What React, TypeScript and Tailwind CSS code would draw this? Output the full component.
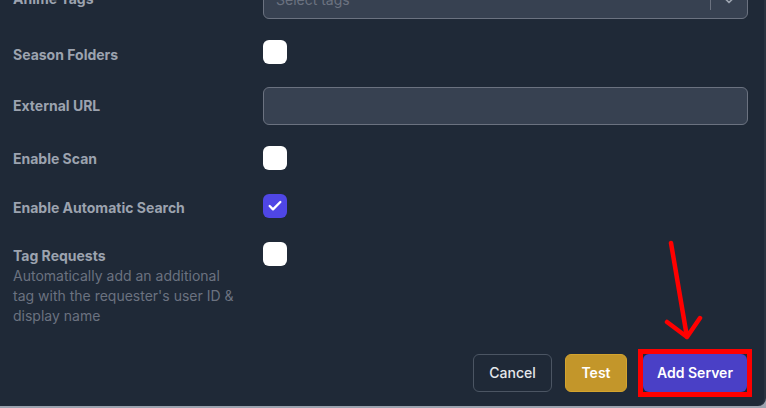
import { Check, ChevronDown } from "lucide-react";

const labelClass = "w-[250px] shrink-0 pt-2 text-sm leading-5 font-bold text-[#9ca3af]";

function Box({ checked }: { checked?: boolean }) {
  return checked ? (
    <div className="w-6 h-6 rounded-md bg-[#4f46e5] flex items-center justify-center">
      <Check className="w-4 h-4 text-white" strokeWidth={3.5} />
    </div>
  ) : (
    <div className="w-6 h-6 rounded-md bg-white" />
  );
}

export default function App() {
  return (
    <div className="w-[766px] h-[408px] overflow-hidden bg-[#9ca3af] font-['Inter',sans-serif]">
      <div className="relative h-[406px] bg-[#1f2937] border-r-2 border-[#2a3340] rounded-br-lg overflow-hidden">
        <div className="pl-[13px] pr-4 -mt-[19px]">
          {/* Anime Tags */}
          <div className="flex">
            <div className={labelClass}>Anime Tags</div>
            <div className="flex-1 h-[38px] rounded-md border border-[#6b7280] bg-[#374151] flex items-center">
              <span className="flex-1 pl-3 text-sm text-[#6b7280]">Select tags</span>
              <div className="w-px h-5 bg-[#6b7280]" />
              <div className="w-9 flex justify-center">
                <ChevronDown className="w-5 h-5 text-[#9ca3af]" />
              </div>
            </div>
          </div>

          {/* Season Folders */}
          <div className="flex mt-[18px]">
            <div className={labelClass}>Season Folders</div>
            <div className="pt-[3px]"><Box /></div>
          </div>

          {/* External URL */}
          <div className="flex mt-[22px]">
            <div className={labelClass + " pt-[9px]"}>External URL</div>
            <div className="flex-1 h-[38px] rounded-md border border-[#6b7280] bg-[#374151]" />
          </div>

          {/* Enable Scan */}
          <div className="flex mt-4">
            <div className={labelClass}>Enable Scan</div>
            <div className="pt-[5px]"><Box /></div>
          </div>

          {/* Enable Automatic Search */}
          <div className="flex mt-5">
            <div className={labelClass}>Enable Automatic Search</div>
            <div className="pt-1"><Box checked /></div>
          </div>

          {/* Tag Requests */}
          <div className="flex mt-5">
            <div className="w-[250px] shrink-0 pt-2 text-sm leading-5">
              <div className="font-bold text-[#9ca3af]">Tag Requests</div>
              <div className="text-[#6b7280] pr-6">
                Automatically add an additional tag with the requester's user ID &amp; display name
              </div>
            </div>
            <div className="pt-1"><Box /></div>
          </div>

          {/* Buttons */}
          <div className="flex justify-end items-center gap-[13px] mt-7 pr-px">
            <button className="h-[38px] w-[79px] rounded-md border border-[#4b5563] text-sm font-medium text-[#e5e7eb]">
              Cancel
            </button>
            <button className="h-[38px] w-[62px] rounded-md border border-[#d4a42e] bg-[#c3962a] text-sm font-semibold text-white">
              Test
            </button>
            <div className="relative ml-[3px]">
              <button className="h-[38px] w-[104px] rounded-md bg-[#4a40c6] text-sm font-semibold text-white">
                Add Server
              </button>
              <div className="absolute -left-[5px] -right-[5px] -top-[5px] -bottom-[5px] border-[5px] border-[#ff0000]" />
            </div>
          </div>
        </div>

        {/* annotation arrow */}
        <svg className="absolute left-0 top-0" width="766" height="408" fill="none">
          <path d="M671 243 L687 337 M667 322 L687 337 L700 318" stroke="#ff0000" strokeWidth="4.5" strokeLinecap="round" strokeLinejoin="round" />
        </svg>
      </div>
    </div>
  );
}
